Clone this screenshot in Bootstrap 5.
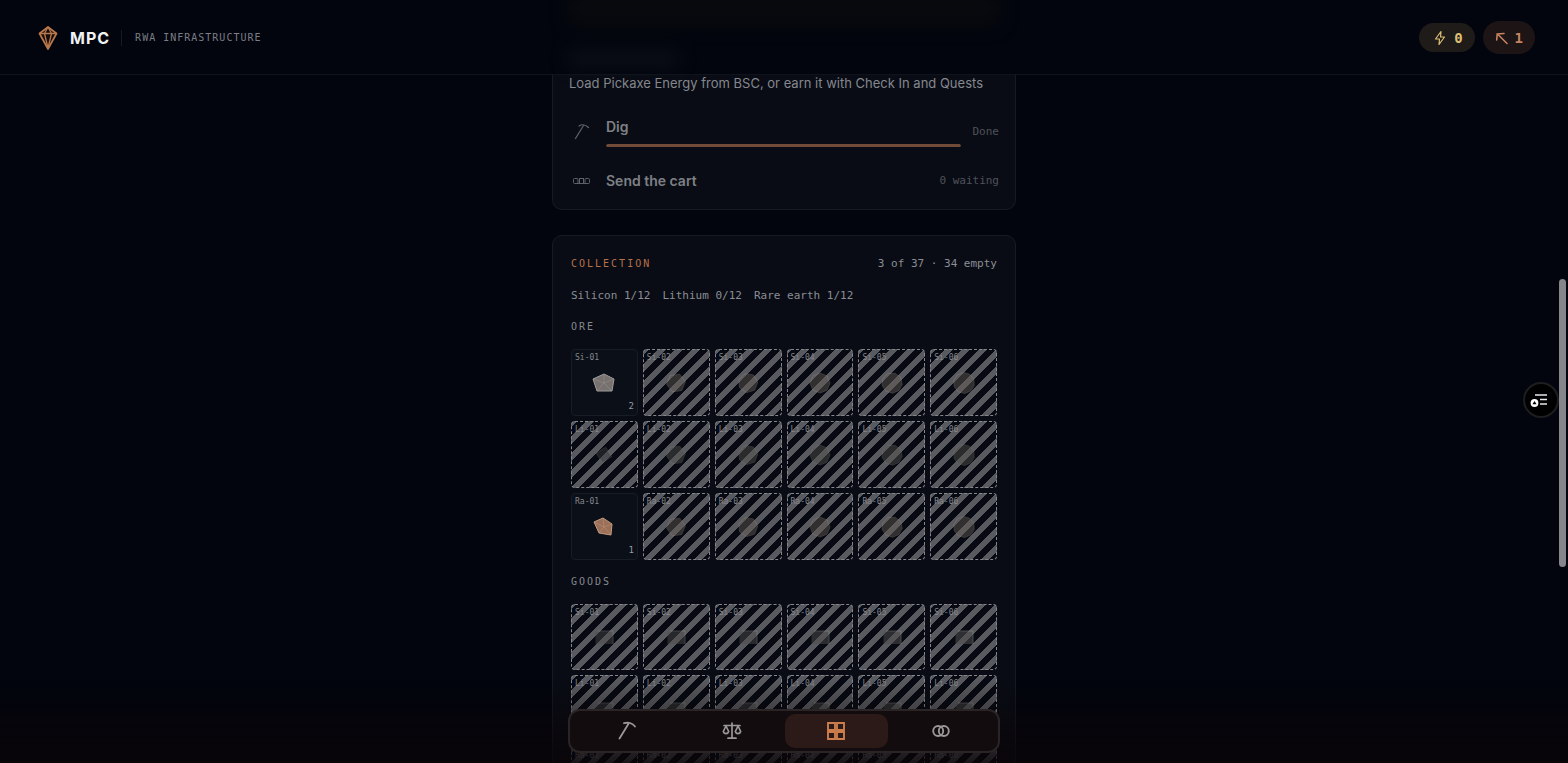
<!DOCTYPE html>
<html lang="en">
<head>
<meta charset="utf-8">
<meta name="viewport" content="width=device-width, initial-scale=1">
<title>MPC – RWA Infrastructure</title>
<link href="https://cdn.jsdelivr.net/npm/bootstrap@5.3.0/dist/css/bootstrap.min.css" rel="stylesheet">
<style>
  :root { --mono: "DejaVu Sans Mono", "Liberation Mono", monospace; --line: #171a21; }
  body { background: #02050d; color: #8b8d94; font-family: Inter, sans-serif; font-size: 13px; line-height: 20px; }
  .mono { font-family: var(--mono); }
  .app { height: 100vh; overflow: hidden; }
  .topbar { height: 75px; flex: none; border-bottom: 1px solid #0f131b; padding: 1px 33px 0; }
  .ghosts { inset: 0; margin: 0 auto; width: 464px; filter: blur(9px); opacity: .5; pointer-events: none; }
  .ghosts i { position: absolute; display: block; }
  .ghosts .g1 { left: 16px; right: 16px; top: -10px; height: 36px; background: #0f0e0f; }
  .ghosts .g2 { left: 16px; width: 110px; top: 52px; height: 14px; background: #191c24; }
  .brand { color: #f1f2f4; font-size: 16px; font-weight: 700; letter-spacing: 1px; text-decoration: none; gap: 11px; padding-left: 4px; }
  .tagline { font-size: 10px; letter-spacing: 1px; color: #7b7e86; border-left: 1px solid #171a21; padding-left: 13px; margin-left: 11px; line-height: 16px; }
  .pill { border: 0; border-radius: 20px; font-size: 14px; font-weight: 700; gap: 7px; padding: 0 12px 0 14px; height: 29px; color: #dcbf74; background: #1e1b19; }
  .pill.pick { height: 33px; background: #1d1415; color: #c58360; gap: 6px; padding: 0 12px; }
  .column { width: 100%; max-width: 464px; margin: 0 auto; }
  .panel { background: #090c14; border: 1px solid var(--line); border-radius: 10px; }
  .panel.first { border-top: 0; border-radius: 0 0 10px 10px; padding: 0 16px 10px; }
  .lede { font-size: 13px; line-height: 16px; color: #85888f; margin-bottom: 26px; }
  .task { gap: 12px; color: #7e8086; font-size: 14px; font-weight: 600; }
  .task svg { width: 25px; flex: none; color: #5d6067; }
  .state { color: #4f5259; font-weight: 400; font-size: 11px; }
  .meter { height: 3px; border-radius: 2px; background: #14171d; margin-top: 7px; }
  .meter .progress-bar { background: #6f4b38; border-radius: 2px; }
  .last-task { margin: 24px 0 8px; }
  .stock { margin-top: 25px; padding: 18px; }
  .cap { font-size: 10px; letter-spacing: 2px; font-weight: 400; margin: 0; line-height: 20px; color: #85888f; }
  .cap.title { color: #b5714a; }
  .small-mono { font-size: 11px; color: #8b8e95; }
  .totals { gap: 12px; line-height: 19px; }
  .tiles { display: grid; grid-template-columns: repeat(6, 1fr); gap: 5px; }
  .tile { aspect-ratio: 1; border: 1px dashed #85868a; border-radius: 4px; position: relative; display: flex; align-items: center; justify-content: center;
    background: repeating-linear-gradient(-45deg, #070a12 0 6px, #595a5f 6px 12px) border-box; }
  .tile.owned { background: #0b1018; border: 1px solid #181c24; }
  .tile .code { position: absolute; left: 3px; top: 3px; font-size: 8px; line-height: 10px; color: #85878d; }
  .tile .num { position: absolute; right: 3px; bottom: 3px; font-size: 9px; line-height: 12px; color: #979aa0; }
  .fade-foot { position: fixed; left: 0; right: 0; bottom: 0; height: 83px; background: linear-gradient(#0a050800, #0a0508cc); }
  .dock { position: fixed; left: 0; right: 0; bottom: 10px; margin: 0 auto; width: 432px; height: 44px; padding: 3px 6px; gap: 2px;
    background: #130c0e; border: 2px solid #2a2425; border-radius: 12px; }
  .dock .btn { flex: 1; border: 0; border-radius: 10px; padding: 0; color: #9a9799; display: flex; align-items: center; justify-content: center; }
  .dock .btn.active { background: #2b1a17; color: #cc7d4b; }
  .side { position: fixed; right: 9px; top: 382px; width: 36px; height: 36px; border-radius: 50%; background: #000; border: 2px solid #1e1e20; padding: 0 4px 0 0; display: flex; align-items: center; justify-content: center; }
  .thumb { position: fixed; right: 2px; top: 279px; width: 7px; height: 288px; border-radius: 4px; background: #85868c; }
</style>
</head>
<body>
<div class="app d-flex flex-column">
  <header class="topbar d-flex align-items-center position-relative">
    <div class="ghosts position-absolute"><i class="g1"></i><i class="g2"></i></div>
    <a href="#" class="brand d-flex align-items-center">
      <svg width="22" height="26" viewBox="0 0 22 26" fill="none" stroke="#b9784d" stroke-width="1.700" stroke-linejoin="round"><path d="M11 2 2.500 8.500 11 24 19.500 8.500Z" fill="#160d0b"/><path d="M2.500 8.500h17M11 2 7.500 8.500 11 23l3.500-14.500Z" stroke-width="1.300"/></svg>
      <span>MPC</span>
    </a>
    <span class="tagline mono">RWA INFRASTRUCTURE</span>
    <div class="ms-auto d-flex align-items-center gap-2">
      <button class="pill mono d-flex align-items-center" aria-label="Energy">
        <svg width="14" height="16" viewBox="0 0 14 16" fill="none" stroke="currentColor" stroke-width="1.200" stroke-linejoin="round"><path d="M8 1.500 2.500 9h4L6 14.500 11.500 7h-4Z"/></svg>
        <span>0</span>
      </button>
      <button class="pill pick mono d-flex align-items-center" aria-label="Pickaxes">
        <svg width="14" height="14" viewBox="0 0 14 14" fill="none" stroke="currentColor" stroke-width="1.600" stroke-linecap="round"><path d="M3 3.500 12 12.500M1.700 9 2.200 3 9 2.500"/></svg>
        <span>1</span>
      </button>
    </div>
  </header>

  <main class="column">
    <section class="panel first">
      <p class="lede">Load Pickaxe Energy from BSC, or earn it with Check In and Quests</p>
      <div class="task d-flex align-items-center">
        <svg height="18" viewBox="0 0 25 18" fill="none" stroke="currentColor" stroke-width="1.300" stroke-linecap="round"><path d="M6.500 15.500 14.500 2.500M10 3C13 1 17 2 19.500 4.500"/></svg>
        <div class="flex-grow-1"><div>Dig</div>
          <div class="progress meter" role="progressbar" aria-label="Dig"><div class="progress-bar w-100"></div></div></div>
        <span class="state mono">Done</span>
      </div>
      <div class="task last-task d-flex align-items-center">
        <svg height="16" viewBox="0 0 25 16" fill="none" stroke="currentColor"><rect x="4.500" y="5.500" width="4.500" height="5" rx="1"/><rect x="10.500" y="5.500" width="4" height="5"/><rect x="16" y="5.500" width="4.500" height="5" rx="1"/><path d="M8 10.500h9"/></svg>
        <div class="flex-grow-1">Send the cart</div>
        <span class="state mono">0 waiting</span>
      </div>
    </section>

    <section class="panel stock">
      <div class="d-flex justify-content-between">
        <h2 class="cap title mono">COLLECTION</h2>
        <span class="small-mono mono">3 of 37 · 34 empty</span>
      </div>
      <div class="small-mono mono totals d-flex mt-2 pt-1"><span>Silicon 1/12</span><span>Lithium 0/12</span><span>Rare earth 1/12</span></div>
      <h3 class="cap mono mt-2 pt-1">ORE</h3>
      <div class="tiles mt-2 pt-1" id="ore"></div>
      <h3 class="cap mono mt-2 pt-1">GOODS</h3>
      <div class="tiles mt-2 pt-1" id="goods"></div>
    </section>
  </main>
</div>

<div class="fade-foot"></div>
<nav class="dock d-flex" aria-label="Main">
  <button class="btn" aria-label="Mine"><svg width="20" height="20" viewBox="0 0 20 20" fill="none" stroke="currentColor" stroke-width="1.800" stroke-linecap="round"><path d="M2.500 17.500 11.500 2.800M7 2.200C11 .8 15.500 2 18 5.500"/></svg></button>
  <button class="btn" aria-label="Market"><svg width="20" height="20" viewBox="0 0 20 20" fill="none" stroke="currentColor" stroke-width="1.700" stroke-linecap="round" stroke-linejoin="round"><path d="M10 2v15M6 17.200h8M2 4.500h16M4 5 1.300 10.500a2.800 2.800 0 0 0 5.400 0ZM16 5l-2.700 5.500a2.800 2.800 0 0 0 5.400 0Z"/></svg></button>
  <button class="btn active" aria-label="Collection"><svg width="20" height="20" viewBox="0 0 20 20" fill="none" stroke="currentColor" stroke-width="1.900"><path d="M2 2h7v7H2ZM11 2h7v7h-7ZM2 11h7v7H2ZM11 11h7v7h-7Z"/></svg></button>
  <button class="btn" aria-label="Links"><svg width="20" height="20" viewBox="0 0 20 20" fill="none" stroke="currentColor" stroke-width="1.900"><circle cx="7.200" cy="10" r="5"/><circle cx="12.800" cy="10" r="5"/></svg></button>
</nav>
<div class="thumb"></div>
<button class="side" aria-label="Open panel"><svg width="20" height="18" viewBox="0 0 20 18" fill="none" stroke="#e8e8ea" stroke-width="1.400"><path d="M6 4h12M11 8.500h7M11 13h7"/><circle cx="5.500" cy="12" r="3.900" fill="#fff" stroke="none"/><path d="m5.500 10 2 3.300h-4Z" fill="#000" stroke="none"/></svg></button>

<script>
  const kinds = ["Si", "Li", "Ra"];
  const tints = { Si: "#aaa29e", Li: "#84827a", Ra: "#a69684" };
  // Regular polygon with n corners, turned by a few degrees per tile
  const poly = (n, r, turn) => Array.from({ length: n }, (_, i) => {
    const a = (i / n) * 2 * Math.PI - Math.PI / 2 + turn;
    return (13 + r * Math.cos(a)).toFixed(1) + "," + (14 + r * Math.sin(a)).toFixed(1);
  }).join(" ");
  const gem = k => {
    const [fill, edge, pts] = k === "Si" ? ["#77716f", "#a09b99", "13,5 23,10 21,22 6,22 2,10"] : ["#9c7058", "#c19a80", "12,5 21,11 20,22 8,20 3,9"];
    return `<svg width="26" height="26" viewBox="0 0 26 26"><polygon points="${pts}" fill="${fill}" stroke="${edge}"/><path d="M13 14 ${pts.split(" ").join("M13 14 ")}" stroke="${edge}" stroke-width=".6" opacity=".7"/></svg>`;
  };
  const rock = (k, n) => `<svg width="26" height="26" viewBox="0 0 26 26" opacity=".45"><polygon points="${poly(n === 1 ? 4 : n + 4, n === 1 ? 8 : 9 + n / 4, n / 5)}" fill="${n === 1 ? "#3a3b3f" : k === "Li" ? "#54534e" : "#655c56"}" stroke="${tints[k]}" stroke-width=".6"/></svg>`;
  const crate = n => `<svg width="26" height="26" viewBox="0 0 26 26" opacity="${.4 + n / 40}"><path d="M7 7H22V20H4.500V9Z" fill="#4f4e4d"/><path d="M7 7H22V20" fill="none" stroke="#9c9c9c" stroke-width=".8"/></svg>`;
  const owned = { "Si1": 2, "Ra1": 1 };
  const build = (id, isOre) => {
    document.getElementById(id).innerHTML = kinds.map(k => [1, 2, 3, 4, 5, 6].map(n => {
      const have = isOre && owned[k + n];
      return `<div class="tile${have ? " owned" : ""}"><span class="code mono">${k}-0${n}</span>${have ? gem(k) : isOre ? rock(k, n) : crate(n)}${have ? `<span class="num mono">${have}</span>` : ""}</div>`;
    }).join("")).join("");
  };
  build("ore", true);
  build("goods", false);
</script>
<script src="https://cdn.jsdelivr.net/npm/bootstrap@5.3.0/dist/js/bootstrap.bundle.min.js"></script>
</body>
</html>
